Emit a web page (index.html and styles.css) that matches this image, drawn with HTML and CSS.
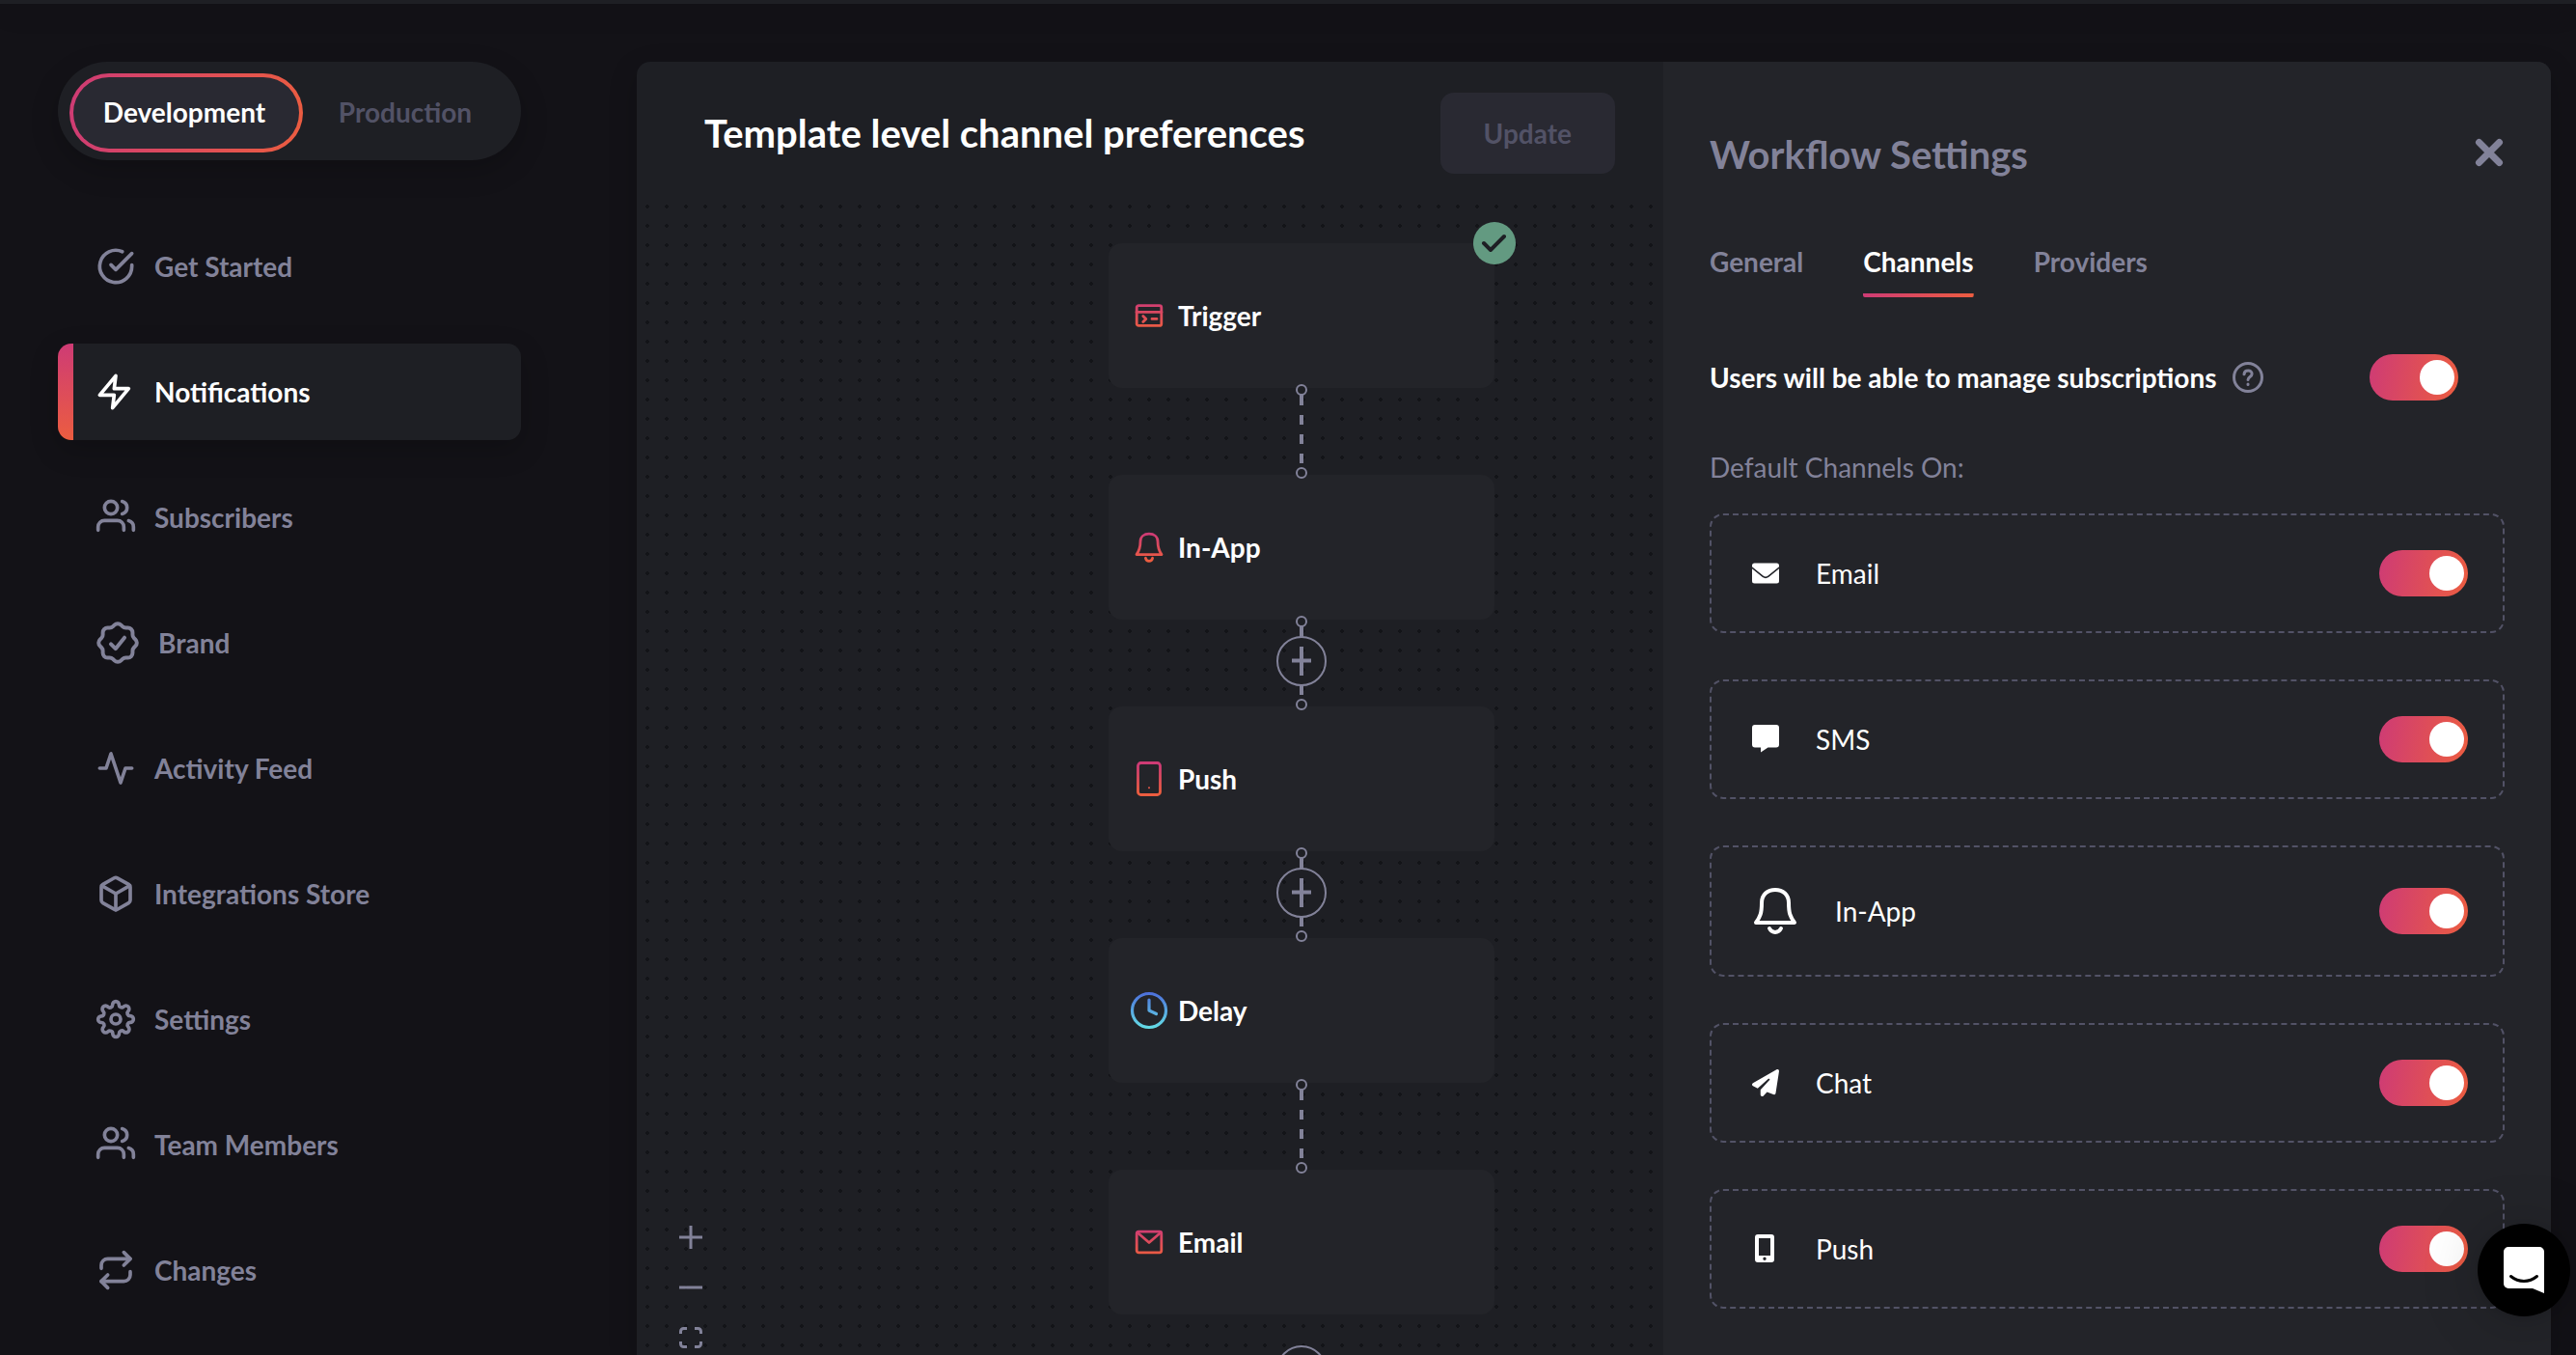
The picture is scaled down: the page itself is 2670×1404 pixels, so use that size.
FILE: index.html
```html
<!DOCTYPE html>
<html lang="en">
<head>
<meta charset="utf-8">
<title>Template level channel preferences</title>
<link rel="stylesheet" href="styles.css">
</head>
<body>
<svg class="defs" width="0" height="0" aria-hidden="true">
  <defs>
    <linearGradient id="warm" gradientUnits="userSpaceOnUse" x1="0" y1="5" x2="0" y2="33">
      <stop offset="0" stop-color="#ce3b75"/><stop offset="1" stop-color="#ec5d40"/>
    </linearGradient>
    <linearGradient id="cool" gradientUnits="userSpaceOnUse" x1="0" y1="0" x2="0" y2="38">
      <stop offset="0" stop-color="#4c6ddb"/><stop offset="1" stop-color="#64dfe6"/>
    </linearGradient>
  </defs>
</svg>

<div class="topbar"></div>
<div class="app">
  <aside class="sidebar">
    <div class="env-switch" role="group" aria-label="Environment">
      <button class="env env-active" type="button">Development</button>
      <button class="env" type="button">Production</button>
    </div>
    <nav class="nav">
      <a class="nav-item" href="#get-started">
        <svg class="nav-icon" viewBox="0 0 24 24"><path d="M22 11.08V12a10 10 0 1 1-5.93-9.14"/><path d="M22 4 12 14.01l-3-3"/></svg>
        Get Started</a>
      <a class="nav-item nav-active" href="#notifications">
        <svg class="nav-icon" viewBox="1 0 24 24"><path d="M13 2 3 14h9l-1 8 10-12h-9l1-8z"/></svg>
        Notifications</a>
      <a class="nav-item" href="#subscribers">
        <svg class="nav-icon" viewBox="0 1 24 24"><path d="M17 21v-2a4 4 0 0 0-4-4H5a4 4 0 0 0-4 4v2"/><circle cx="9" cy="7" r="4"/><path d="M23 21v-2a4 4 0 0 0-3-3.87"/><path d="M16 3.13a4 4 0 0 1 0 7.75"/></svg>
        Subscribers</a>
      <a class="nav-item" href="#brand">
        <svg class="nav-icon nav-icon-large" viewBox="2 2 20 20"><path d="M5 7.2a2.2 2.2 0 0 1 2.2-2.2h1a2.2 2.2 0 0 0 1.55-.64l.7-.7a2.2 2.2 0 0 1 3.12 0l.7.7c.412.41.97.64 1.55.64h1a2.2 2.2 0 0 1 2.2 2.2v1c0 .58.23 1.138.64 1.55l.7.7a2.2 2.2 0 0 1 0 3.12l-.7.7a2.2 2.2 0 0 0-.64 1.55v1a2.2 2.2 0 0 1-2.2 2.2h-1a2.2 2.2 0 0 0-1.55.64l-.7.7a2.2 2.2 0 0 1-3.12 0l-.7-.7a2.2 2.2 0 0 0-1.55-.64h-1a2.2 2.2 0 0 1-2.2-2.2v-1a2.2 2.2 0 0 0-.64-1.55l-.7-.7a2.2 2.2 0 0 1 0-3.12l.7-.7a2.2 2.2 0 0 0 .64-1.55z"/><path d="m8.8 12.6 2.2 2.2 4.2-5.2"/></svg>
        Brand</a>
      <a class="nav-item" href="#activity">
        <svg class="nav-icon" viewBox="0 0 24 24"><path d="M22 12h-4l-3 9L9 3l-3 9H2"/></svg>
        Activity Feed</a>
      <a class="nav-item" href="#integrations">
        <svg class="nav-icon" viewBox="0 0 24 24"><path d="M21 16V8a2 2 0 0 0-1-1.73l-7-4a2 2 0 0 0-2 0l-7 4A2 2 0 0 0 3 8v8a2 2 0 0 0 1 1.73l7 4a2 2 0 0 0 2 0l7-4A2 2 0 0 0 21 16z"/><path d="M3.27 6.96 12 12.01l8.73-5.05M12 22.08V12"/></svg>
        Integrations Store</a>
      <a class="nav-item" href="#settings">
        <svg class="nav-icon" viewBox="0 0 24 24"><circle cx="12" cy="12" r="3"/><path d="M19.4 15a1.65 1.65 0 0 0 .33 1.82l.06.06a2 2 0 0 1 0 2.83 2 2 0 0 1-2.83 0l-.06-.06a1.65 1.65 0 0 0-1.82-.33 1.65 1.65 0 0 0-1 1.51V21a2 2 0 0 1-2 2 2 2 0 0 1-2-2v-.09A1.65 1.65 0 0 0 9 19.4a1.65 1.65 0 0 0-1.82.33l-.06.06a2 2 0 0 1-2.83 0 2 2 0 0 1 0-2.83l.06-.06a1.65 1.65 0 0 0 .33-1.82 1.65 1.65 0 0 0-1.51-1H3a2 2 0 0 1-2-2 2 2 0 0 1 2-2h.09A1.65 1.65 0 0 0 4.6 9a1.65 1.65 0 0 0-.33-1.82l-.06-.06a2 2 0 0 1 0-2.83 2 2 0 0 1 2.83 0l.06.06a1.65 1.65 0 0 0 1.82.33H9a1.65 1.65 0 0 0 1-1.51V3a2 2 0 0 1 2-2 2 2 0 0 1 2 2v.09a1.65 1.65 0 0 0 1 1.51 1.65 1.65 0 0 0 1.82-.33l.06-.06a2 2 0 0 1 2.83 0 2 2 0 0 1 0 2.83l-.06.06a1.65 1.65 0 0 0-.33 1.82V9a1.65 1.65 0 0 0 1.51 1H21a2 2 0 0 1 2 2 2 2 0 0 1-2 2h-.09a1.65 1.65 0 0 0-1.51 1z"/></svg>
        Settings</a>
      <a class="nav-item" href="#team">
        <svg class="nav-icon" viewBox="0 1 24 24"><path d="M17 21v-2a4 4 0 0 0-4-4H5a4 4 0 0 0-4 4v2"/><circle cx="9" cy="7" r="4"/><path d="M23 21v-2a4 4 0 0 0-3-3.87"/><path d="M16 3.13a4 4 0 0 1 0 7.75"/></svg>
        Team Members</a>
      <a class="nav-item" href="#changes">
        <svg class="nav-icon" viewBox="0 0 24 24"><path d="m17 1 4 4-4 4"/><path d="M3 11V9a4 4 0 0 1 4-4h14M7 23l-4-4 4-4"/><path d="M21 13v2a4 4 0 0 1-4 4H3"/></svg>
        Changes</a>
    </nav>
  </aside>

  <main class="editor">
    <section class="workflow">
      <header class="workflow-header">
        <h1 class="title">Template level channel preferences</h1>
        <button class="update" type="button" disabled>Update</button>
      </header>
      <div class="canvas">
        <div class="flow">
          <div class="node">
            <svg class="node-icon" viewBox="0 0 38 38" stroke="url(#warm)"><rect x="6.2" y="8.6" width="25.6" height="20.8" rx="2"/><path d="M6 15.4h26M12.8 19.4l3 3-3 3M22 22.4h5"/></svg>
            Trigger
            <svg class="node-check" viewBox="0 0 44 44"><circle cx="22" cy="22" r="22" fill="#639a81"/><path d="m11 22 7 7 14-14" fill="none" stroke="#1e1f24" stroke-width="4" stroke-linecap="round" stroke-linejoin="round"/></svg>
          </div>
          <div class="edge">
            <svg class="edge-line" viewBox="0 0 52 90"><path d="M26 7v11M26 28v10M26 48v10M26 68v10"/><circle cx="26" cy="2" r="5"/><circle cx="26" cy="88" r="5"/></svg>
          </div>
          <div class="node">
            <svg class="node-icon" viewBox="0 0 38 38" stroke="url(#warm)"><path d="M6 26.6C8.6 23 10 20 10 13c0-5 4-7.8 9-7.8s9 2.8 9 7.8c0 7 1.4 10 4 13.6z"/><path d="M15.4 30.3c1 4 6.200 4 7.200 0"/></svg>
            In-App
          </div>
          <div class="edge">
            <svg class="edge-line" viewBox="0 0 52 90"><path d="M26 7v11M26 28v10M26 48v10M26 68v10"/><circle cx="26" cy="2" r="5"/><circle cx="26" cy="88" r="5"/></svg>
            <button class="add" type="button" aria-label="Add step"><svg class="add-icon" viewBox="0 0 20 20"><path d="M10 0v20M0 9.500h20"/></svg></button>
          </div>
          <div class="node">
            <svg class="node-icon" viewBox="0 0 38 38" stroke="url(#warm)"><rect x="7.500" y="2.500" width="23" height="33" rx="3"/><path d="M19 28.200v.1" stroke-width="2"/></svg>
            Push
          </div>
          <div class="edge">
            <svg class="edge-line" viewBox="0 0 52 90"><path d="M26 7v11M26 28v10M26 48v10M26 68v10"/><circle cx="26" cy="2" r="5"/><circle cx="26" cy="88" r="5"/></svg>
            <button class="add" type="button" aria-label="Add step"><svg class="add-icon" viewBox="0 0 20 20"><path d="M10 0v20M0 9.500h20"/></svg></button>
          </div>
          <div class="node">
            <svg class="node-icon node-icon-bold" viewBox="0 0 38 38" stroke="url(#cool)"><circle cx="19" cy="19" r="17.500"/><path d="M19 8v11l7.500 3.500"/></svg>
            Delay
          </div>
          <div class="edge">
            <svg class="edge-line" viewBox="0 0 52 90"><path d="M26 7v11M26 28v10M26 48v10M26 68v10"/><circle cx="26" cy="2" r="5"/><circle cx="26" cy="88" r="5"/></svg>
          </div>
          <div class="node">
            <svg class="node-icon" viewBox="0 0 38 38" stroke="url(#warm)"><rect x="6.200" y="8.200" width="25.600" height="21.600" rx="2"/><path d="m6.800 9 12.200 10.500L31.200 9"/></svg>
            Email
          </div>
          <button class="add add-last" type="button" aria-label="Add step"><svg class="add-icon" viewBox="0 0 20 20"><path d="M10 0v20M0 9.500h20"/></svg></button>
        </div>
        <div class="zoom-controls">
          <button class="zoom-button" type="button" aria-label="Zoom in"><svg viewBox="0 0 24 24"><path d="M12 0v24M0 12h24"/></svg></button>
          <button class="zoom-button" type="button" aria-label="Zoom out"><svg viewBox="0 0 24 24"><path d="M0 12h24"/></svg></button>
          <button class="zoom-button" type="button" aria-label="Fit view"><svg viewBox="0 0 24 24"><path d="M1.500 8V5.500a3 3 0 0 1 3-3H8M16 2.500h3.500a3 3 0 0 1 3 3V8M22.500 16v2.500a3 3 0 0 1-3 3H16M8 21.500H4.500a3 3 0 0 1-3-3V16"/></svg></button>
        </div>
      </div>
    </section>

    <section class="settings">
      <div class="settings-head">
        <h2 class="settings-title">Workflow Settings</h2>
        <button class="close" type="button" aria-label="Close"><svg viewBox="0 0 28 28"><path d="m3.500 3.500 21 21M24.500 3.500l-21 21"/></svg></button>
      </div>
      <div class="tabs" role="tablist">
        <button class="tab" type="button" role="tab">General</button>
        <button class="tab tab-active" type="button" role="tab" aria-selected="true">Channels</button>
        <button class="tab" type="button" role="tab">Providers</button>
      </div>
      <div class="manage">
        <label class="manage-label" for="manage">Users will be able to manage subscriptions</label>
        <svg class="help" viewBox="0 0 32 32"><circle cx="16" cy="16" r="14.500"/><path d="M12 12.800c.3-5.200 8.300-5 8.100-.3 0 3-4.100 3-4.100 6M16 23v.4"/></svg>
        <input class="toggle" id="manage" type="checkbox" checked>
      </div>
      <p class="caption">Default Channels On:</p>
      <div class="channels">
        <div class="channel">
          <svg class="channel-icon" viewBox="0 0 28 28"><path d="M2.500 3.500h23A2.500 2.500 0 0 1 28 6v1.200L16.500 16.500q-2.500 1.800-5 0L0 7.200V6a2.500 2.500 0 0 1 2.500-2.500z"/><path d="M0 9.200 10.800 18q3.200 2.300 6.400 0L28 9.200V22a2.500 2.500 0 0 1-2.500 2.500h-23A2.500 2.500 0 0 1 0 22z"/></svg>
          <label class="channel-name" for="ch-email">Email</label>
          <input class="toggle" id="ch-email" type="checkbox" checked>
        </div>
        <div class="channel">
          <svg class="channel-icon" viewBox="0 0 28 28"><path d="M3 -1h22a3 3 0 0 1 3 3v17.500a3 3 0 0 1-3 3h-8.500L9 27.500v-5H3a3 3 0 0 1-3-3V2a3 3 0 0 1 3-3z"/></svg>
          <label class="channel-name" for="ch-sms">SMS</label>
          <input class="toggle" id="ch-sms" type="checkbox" checked>
        </div>
        <div class="channel">
          <svg class="channel-bell" viewBox="0 0 48 60"><path d="M4 42C8.500 36 10 32 10 21.500 10 13 16 8 24 8s14 5 14 13.500C38 32 39.500 36 44 42z"/><path d="M18 48c2.500 5.200 9.500 5.200 12 0"/></svg>
          <label class="channel-name" for="ch-inapp">In-App</label>
          <input class="toggle" id="ch-inapp" type="checkbox" checked>
        </div>
        <div class="channel">
          <svg class="channel-icon" viewBox="0 0 512 512"><path d="M498.100 5.600c10.100 7 15.400 19.100 13.500 31.200l-64 416c-1.500 9.700-7.400 18.200-16 23s-18.900 5.400-28 1.600L284 427.700l-68.500 74.100c-8.900 9.700-22.900 12.900-35.200 8.100S160 493.200 160 480v-83.600c0-4 1.500-7.800 4.200-10.700l167.600-182.900c5.800-6.300 5.600-16-.4-22s-15.700-6.400-22-.7L106 360.800l-88.300-44.200C7.100 311.300.3 300.700 0 288.900s5.900-22.800 16.100-28.700l448-256c10.700-6.100 23.900-5.500 34 1.400z"/></svg>
          <label class="channel-name" for="ch-chat">Chat</label>
          <input class="toggle" id="ch-chat" type="checkbox" checked>
        </div>
        <div class="channel">
          <svg class="channel-icon" viewBox="0 0 28 28"><path fill-rule="evenodd" d="M6-1h14a3 3 0 0 1 3 3v23a3 3 0 0 1-3 3H6a3 3 0 0 1-3-3V2a3 3 0 0 1 3-3zM7 3v18h12V3zM13 22.500a1.700 1.700 0 1 0 0 3.400 1.700 1.700 0 0 0 0-3.400z"/></svg>
          <label class="channel-name" for="ch-push">Push</label>
          <input class="toggle" id="ch-push" type="checkbox" checked>
        </div>
      </div>
    </section>
  </main>
</div>

<button class="messenger" type="button" aria-label="Open chat">
  <svg class="messenger-icon" viewBox="0 0 42 48"><path d="M5 0h32a5 5 0 0 1 5 5v43l-12-5H5a5 5 0 0 1-5-5V5a5 5 0 0 1 5-5z" fill="#fff"/><path d="M7.500 30.500c8 6.500 19 6.500 27 0" fill="none" stroke="#000" stroke-width="3" stroke-linecap="round"/></svg>
</button>
</body>
</html>
```

FILE: styles.css
```css
:root {
  --bg: #131217;
  --panel: #1e1f24;
  --raised: #232429;
  --control: #292932;
  --muted: #828299;
  --faint: #525266;
  --pink: #ce3b75;
  --orange: #ec5d40;
  --warm: linear-gradient(99deg, var(--pink), var(--orange));
}

* { box-sizing: border-box; }

body {
  margin: 0;
  height: 100vh;
  display: flex;
  flex-direction: column;
  overflow: hidden;
  background: var(--bg);
  color: #fff;
  font-family: Lato, "Open Sans", sans-serif;
  font-size: 28px;
  line-height: 34px;
}

button {
  margin: 0;
  padding: 0;
  border: 0;
  background: none;
  color: inherit;
  font: inherit;
}

h1, h2, p { margin: 0; }
svg { display: block; overflow: visible; flex: none; }
.defs { position: absolute; }

.topbar {
  flex: none;
  height: 4px;
  background: var(--panel);
  box-shadow: 0 5px 30px rgba(0, 0, 0, .2);
}

.app {
  flex: 1;
  min-height: 0;
  display: flex;
  gap: 120px;
  padding: 60px 26px 0 60px;
}

/* Sidebar */
.sidebar {
  flex: none;
  width: 480px;
  display: flex;
  flex-direction: column;
  gap: 60px;
}

.env-switch {
  display: flex;
  padding: 12px 10px 8px 12px;
  border-radius: 51px;
  background: var(--panel);
  box-shadow: 0 10px 30px rgba(0, 0, 0, .2);
}

.env {
  flex: 1;
  height: 82px;
  padding: 0 4px 2px 0;
  border: 4px solid transparent;
  border-radius: 41px;
  color: var(--faint);
  font-weight: 700;
}

.env-active {
  flex: none;
  width: 242px;
  color: #fff;
  background: linear-gradient(var(--control), var(--control)) padding-box, var(--warm) border-box;
}

.nav {
  display: flex;
  flex-direction: column;
  gap: 30px;
}

.nav-item {
  display: flex;
  align-items: center;
  gap: 20px;
  height: 100px;
  padding-left: 40px;
  border-radius: 14px;
  color: var(--muted);
  font-weight: 700;
  text-decoration: none;
}

.nav-active {
  color: #fff;
  background: linear-gradient(var(--pink), var(--orange)) left / 16px 100% no-repeat var(--panel);
  box-shadow: 0 10px 30px rgba(0, 0, 0, .2);
}

.nav-icon {
  width: 40px;
  height: 40px;
  fill: none;
  stroke: currentColor;
  stroke-width: 2.2;
  stroke-linecap: round;
  stroke-linejoin: round;
}

.nav-icon-large {
  width: 44px;
  height: 44px;
  stroke-width: 1.8;
}

/* Editor */
.editor {
  flex: 1;
  min-width: 0;
  display: flex;
  overflow: hidden;
  border-radius: 14px 14px 0 0;
  background: var(--panel);
  box-shadow: 0 10px 30px rgba(0, 0, 0, .2);
}

.workflow {
  flex: 1;
  min-width: 0;
  display: flex;
  flex-direction: column;
}

.workflow-header {
  display: flex;
  align-items: center;
  justify-content: space-between;
  padding: 32px 50px 32px 70px;
}

.title {
  font-size: 40px;
  line-height: 48px;
  font-weight: 700;
}

.update {
  height: 84px;
  padding: 0 45px;
  border-radius: 14px;
  background: var(--control);
  color: var(--faint);
  font-weight: 700;
}

.canvas {
  flex: 1;
  min-height: 0;
  position: relative;
  overflow: hidden;
  background: radial-gradient(circle at 11px 2px, #131418 2px, transparent 2px) 0 0 / 20px 20px;
}

.flow {
  position: absolute;
  top: 40px;
  left: 489px;
  width: 400px;
  display: flex;
  flex-direction: column;
  align-items: center;
}

.node {
  position: relative;
  display: flex;
  align-items: center;
  gap: 11px;
  width: 100%;
  height: 150px;
  padding-left: 23px;
  border-radius: 14px;
  background: var(--raised);
  font-weight: 700;
}

.node-icon {
  width: 38px;
  height: 38px;
  fill: none;
  stroke-width: 2.8;
  stroke-linecap: round;
  stroke-linejoin: round;
}

.node-icon-bold { stroke-width: 3.2; }

.node-check {
  position: absolute;
  top: -22px;
  right: -22px;
  width: 44px;
  height: 44px;
}

.edge {
  z-index: 1;
  display: grid;
  width: 52px;
  height: 90px;
}

.edge-line {
  grid-area: 1 / 1;
  width: 52px;
  height: 90px;
  fill: none;
  stroke: var(--muted);
  stroke-width: 4;
}

.edge-line circle {
  fill: var(--panel);
  stroke-width: 2;
}

.add {
  grid-area: 1 / 1;
  display: grid;
  place-items: center;
  width: 52px;
  height: 52px;
  margin-top: 17px;
  border: 2px solid var(--muted);
  border-radius: 50%;
}

.add-last { margin-top: 32px; }

.add-icon {
  width: 20px;
  height: 20px;
  stroke: var(--muted);
  stroke-width: 4;
}

.zoom-controls {
  position: absolute;
  top: 1058px;
  left: 44px;
  display: flex;
  flex-direction: column;
  gap: 28px;
}

.zoom-button {
  width: 24px;
  height: 24px;
}

.zoom-button svg {
  fill: none;
  stroke: var(--muted);
  stroke-width: 3;
}

/* Settings panel */
.settings {
  flex: none;
  width: 920px;
  padding: 72px 48px 48px;
  background: var(--raised);
}

.settings-head {
  display: flex;
  justify-content: space-between;
}

.settings-title {
  color: var(--muted);
  font-size: 40px;
  line-height: 48px;
  font-weight: 700;
}

.close {
  width: 28px;
  height: 28px;
  margin: 8px 2px 0 0;
}

.close svg {
  stroke: var(--muted);
  stroke-width: 7;
  stroke-linecap: round;
}

.tabs {
  display: flex;
  gap: 62px;
  margin-top: 70px;
}

.tab {
  padding-bottom: 20px;
  color: var(--muted);
  font-weight: 700;
}

.tab-active {
  color: #fff;
  background: var(--warm) bottom / 100% 4px no-repeat;
  border-radius: 2px;
}

.manage {
  display: flex;
  align-items: center;
  gap: 16px;
  margin: 59px 48px 0 0;
}

.manage-label { font-weight: 700; }

.help {
  width: 32px;
  height: 32px;
  fill: none;
  stroke: var(--muted);
  stroke-width: 3;
  stroke-linecap: round;
}

.toggle {
  appearance: none;
  flex: none;
  display: flex;
  align-items: center;
  justify-content: flex-end;
  width: 92px;
  height: 48px;
  margin: 0 0 0 auto;
  padding-right: 4px;
  border-radius: 24px;
  background: var(--warm);
}

.toggle::before {
  content: "";
  width: 36px;
  height: 36px;
  border-radius: 50%;
  background: #fff;
}

.caption {
  margin-top: 52px;
  color: var(--muted);
}

.channels {
  display: flex;
  flex-direction: column;
  gap: 48px;
  margin-top: 31px;
}

.channel {
  display: flex;
  align-items: center;
  gap: 38px;
  padding: 36px 36px 36px 42px;
  border: 2px dashed var(--faint);
  border-radius: 14px;
}

.channel-icon {
  width: 28px;
  height: 28px;
  fill: #fff;
}

.channel-bell {
  width: 48px;
  height: 60px;
  fill: none;
  stroke: #fff;
  stroke-width: 4;
  stroke-linecap: round;
  stroke-linejoin: round;
}

.messenger {
  position: fixed;
  right: 6px;
  bottom: 40px;
  display: grid;
  place-items: center;
  width: 96px;
  height: 96px;
  border-radius: 50%;
  background: #000;
  box-shadow: 0 2px 12px rgba(0, 0, 0, .1), 0 4px 64px rgba(0, 0, 0, .2);
}

.messenger-icon {
  width: 42px;
  height: 48px;
}
```
